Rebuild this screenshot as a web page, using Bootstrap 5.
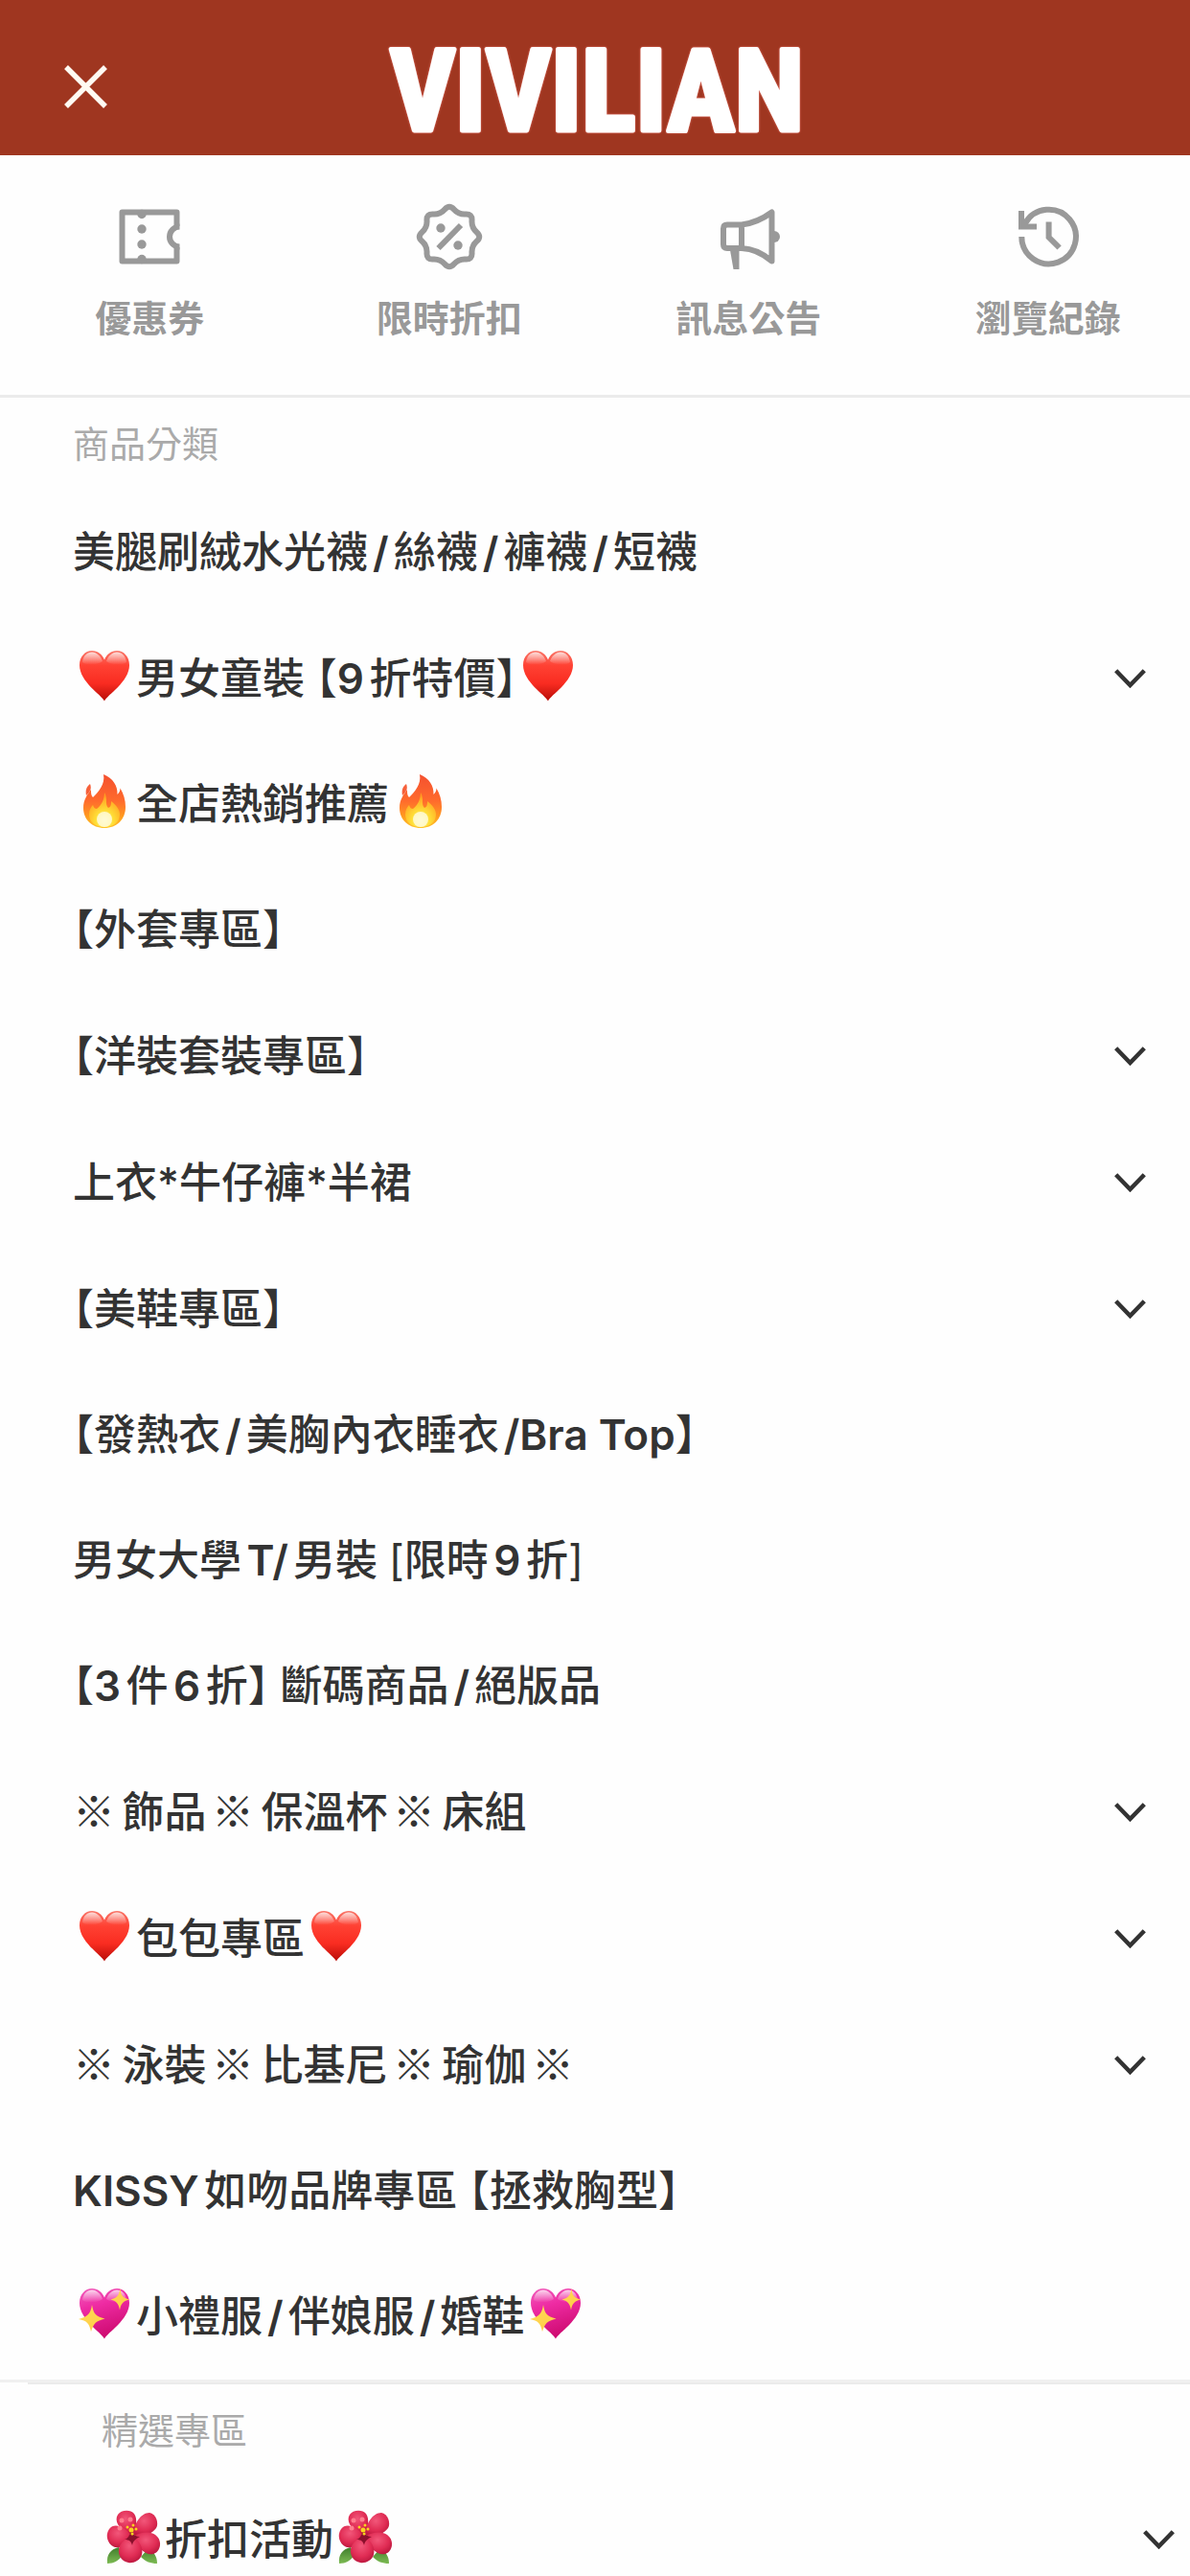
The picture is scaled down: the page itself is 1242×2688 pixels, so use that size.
<!DOCTYPE html>
<html lang="zh-Hant">
<head>
<meta charset="utf-8">
<meta name="viewport" content="width=device-width, initial-scale=1">
<title>VIVILIAN</title>
<link href="https://cdn.jsdelivr.net/npm/bootstrap@5.3.0/dist/css/bootstrap.min.css" rel="stylesheet">
<style>
  body {
    font-family: Inter, "Noto Sans CJK TC", sans-serif;
    color: #333;
    background: #fefefe;
    text-autospace: normal;
  }
  .drawer { height: 100vh; overflow: hidden; }

  /* Brand bar */
  .brand-bar { background: #9f3620; padding: 0 56px; }
  .brand-side { width: 66px; padding-top: 18px; }
  .brand-close { line-height: 0; color: #fffaf2; }
  .brand-logo svg { overflow: visible; }
  .brand-logo text {
    font-family: "Roboto Condensed", Roboto, sans-serif;
    font-weight: 700;
    font-size: 118px;
    fill: #fff;
    stroke: #fff;
    stroke-width: 5px;
    stroke-linejoin: round;
    filter: drop-shadow(0 0 1px #e2695c);
  }

  /* Shortcuts */
  .shortcuts { border-bottom: 3px solid #ebebeb; }
  .shortcut-row { margin-right: -8px; }
  .shortcut { color: #999; padding: 49px 0 55px; }
  .shortcut span { font-size: 38px; line-height: 50px; font-weight: 600; margin-top: 24px; }

  /* Category lists */
  .section-label { font-size: 38px; line-height: 56px; padding: 20px 0; color: #aaa; }
  .cat-section { padding-left: 76px; padding-right: 46px; }
  .cat-shift { padding-left: 106px; padding-right: 16px; }
  .cat-line { border-top: 3px solid #f0f0f0; }
  .cat-line-inner { height: 2px; margin-left: 29px; background: #ebebeb; }
  .cat-item {
    font-size: 44px;
    font-weight: 500;
    line-height: 65px;
    padding: 33px 0;
    color: #333;
    font-feature-settings: "halt";
    white-space: nowrap;
  }
  button.cat-item { line-height: 66px; }
  .cat-item i { font-style: normal; font-weight: 600; margin: 0 5px; }
  .cat-item b { font-weight: 600; }
  .kome { font-family: "Noto Sans CJK TC", sans-serif; font-weight: 300; line-height: 1; margin-right: 2px; }
  .emoji { width: 58px; height: 58px; margin: 0 4px; vertical-align: -10px; }
</style>
</head>
<body>
<svg class="position-absolute" width="0" height="0" aria-hidden="true">
  <defs>
    <linearGradient id="redFill" x1="0" y1="0" x2="0" y2="1">
      <stop offset="0" stop-color="#f9776a"/><stop offset=".3" stop-color="#ff4133"/><stop offset=".65" stop-color="#f92c21"/><stop offset="1" stop-color="#b80d08"/>
    </linearGradient>
    <linearGradient id="pinkFill" x1="0" y1="0" x2=".3" y2="1">
      <stop offset="0" stop-color="#f160bd"/><stop offset=".4" stop-color="#ee2ba3"/><stop offset="1" stop-color="#cf0c72"/>
    </linearGradient>
    <linearGradient id="gloss" x1="0" y1="0" x2="0" y2="1">
      <stop offset="0" stop-color="#fff" stop-opacity=".75"/><stop offset="1" stop-color="#fff" stop-opacity="0"/>
    </linearGradient>
    <linearGradient id="goldFill" x1="0" y1="0" x2="1" y2="1">
      <stop offset="0" stop-color="#ffe45c"/><stop offset=".6" stop-color="#ffcf4a"/><stop offset="1" stop-color="#f59a2e"/>
    </linearGradient>
    <linearGradient id="fireOuter" x1="0" y1="0" x2="0" y2="1">
      <stop offset="0" stop-color="#f4502f"/><stop offset=".5" stop-color="#ff6b2c"/><stop offset=".8" stop-color="#ff9d1f"/><stop offset="1" stop-color="#ffc52b"/>
    </linearGradient>
    <radialGradient id="fireInner" cx=".5" cy=".8" r=".7">
      <stop offset="0" stop-color="#fffbd0"/><stop offset=".4" stop-color="#ffe63a"/><stop offset="1" stop-color="#ffa51f"/>
    </radialGradient>
    <radialGradient id="petal" cx=".45" cy=".35" r=".7">
      <stop offset="0" stop-color="#f2577a"/><stop offset=".6" stop-color="#e02c54"/><stop offset="1" stop-color="#b8163c"/>
    </radialGradient>
    <linearGradient id="leaf" x1="0" y1="0" x2="0" y2="1">
      <stop offset="0" stop-color="#3f7d2c"/><stop offset="1" stop-color="#7dbb53"/>
    </linearGradient>
  </defs>
  <symbol id="heart" viewBox="0 0 58 58">
    <path d="M29 55.500C26 49 3 35.500 3 18 3 9 9 3 16 3c6 0 11 4 13 9.500C31 7 36 3 42 3c7 0 13 6 13 15 0 17.500-23 31-26 37.500z" fill="url(#redFill)"/>
    <path d="M6 15C7 8 11 4.500 16 4.500S25.500 9 27 14c-5 4-16 5-21 1zM31 14c1.500-5 6-9.500 11-9.500S51 8 52 15c-5 4-16 3-21-1z" fill="url(#gloss)"/>
  </symbol>
  <symbol id="sparkheart" viewBox="0 0 58 58">
    <path d="M29 55.500C26 49 3 35.500 3 18 3 9 9 3 16 3c6 0 11 4 13 9.500C31 7 36 3 42 3c7 0 13 6 13 15 0 17.500-23 31-26 37.500z" fill="url(#pinkFill)"/>
    <path d="M6 15C7 8 11 4.500 16 4.500S25.500 9 27 14c-5 4-16 5-21 1zM31 14c1.500-5 6-9.500 11-9.500S51 8 52 15c-5 4-16 3-21-1z" fill="url(#gloss)"/>
    <path d="M16 20c1.500 9 3.500 12 13.500 14.500C20 37 18 39 15 48c-2-9-4-11-13-13 9-2.500 12.500-5 14-15zM45.500 3c.8 7.500 2.500 9.500 9.500 11.500-7 2-8.500 4-10 11-1.500-7-3-9-9.500-11C42.500 12.500 44 10.500 45.500 3z" fill="url(#goldFill)"/>
  </symbol>
  <symbol id="fire" viewBox="0 0 58 58">
    <path d="M28 1c10 4 15 12 14.500 21 2-2 3-4 3-6.500C49 21 51 28 51 35c0 13-9 22-22 22S7 48 7 36c0-8 4-14 8-19 0 4 0 6 2 8 6-6 13-14 11-24z" fill="url(#fireOuter)"/>
    <path d="M14 11c2 5 0 8-4 12-1-5 0-9 4-12z" fill="#f6603a"/>
    <path d="M29 20c4 7 0 12 4 16 3-1 3-4 3-7 6 5 9 9 9 14 0 8-7 13-16 13s-16-5-16-13c0-5 2-8 4-10 1 3 2 4 4 4 5-4 8-10 8-17z" fill="url(#fireInner)" opacity=".9"/>
    <ellipse cx="29" cy="48" rx="8" ry="8" fill="#fffbd8" opacity=".85"/>
  </symbol>
  <symbol id="hibiscus" viewBox="0 0 58 58">
    <path d="M2 57c-1-9 3-15 12-17l4 8c-4 6-9 9-16 9zM54 57c0-7-3-12-9-16l-8 9c5 5 10 7 17 7z" fill="url(#leaf)"/>
    <path d="M22 26C14 20 9 12 13 6c3-5 13-6 17-1 4 6 2 14-1 21z" fill="url(#petal)"/>
    <path d="M29 26C30 15 37 4 46 4c7 1 10 11 7 16-4 6-14 9-22 8z" fill="url(#petal)"/>
    <path d="M30 28c9-5 20-5 25 2 4 6 2 15-5 17-8 2-18-7-20-19z" fill="url(#petal)"/>
    <path d="M27 28C20 18 9 14 4 21c-5 7-1 17 6 19 8 1 14-4 17-12z" fill="url(#petal)"/>
    <path d="M28 29c8 4 12 12 10 19-2 6-9 9-14 8-7-1-11-8-10-14 1-6 7-12 14-13z" fill="url(#petal)"/>
    <path d="M20 32c4-1 5-5 7-9 2 4 5 6 9 6-4 2-7 4-8 9-1-4-3-6-8-6z" fill="#8a0f2b"/>
    <g fill="#f9d21f"><circle cx="27" cy="22" r="2.500"/><circle cx="23" cy="19" r="1.500"/><circle cx="29" cy="17" r="1.500"/><circle cx="32" cy="21" r="1.500"/><circle cx="28" cy="26" r="1.500"/></g>
    <g fill="#ff7d8e"><circle cx="17" cy="12" r="2.500"/><circle cx="26" cy="11" r="2.500"/><circle cx="15" cy="20" r="2.500"/></g>
  </symbol>
  <symbol id="chev" viewBox="0 0 33 20">
    <path d="M1.700 1.700 16.500 17 31.300 1.700" fill="none" stroke="#333" stroke-width="4.500"/>
  </symbol>
</svg>

<div class="drawer">
  <header class="brand-bar d-flex align-items-center justify-content-between">
    <div class="brand-side">
      <button type="button" class="brand-close btn p-0 border-0" aria-label="關閉">
        <svg width="66" height="66" viewBox="0 0 66 66"><path d="M13 13 54 54M54 13 13 54" fill="none" stroke="currentColor" stroke-width="5.500"/></svg>
      </button>
    </div>
    <a href="#" class="brand-logo d-block" aria-label="VIVILIAN">
      <svg width="440" height="162" viewBox="0 0 440 162" class="d-block">
        <text x="222" y="136" text-anchor="middle">VIVILIAN</text>
      </svg>
    </a>
    <div class="brand-side"></div>
  </header>

  <nav class="shortcuts overflow-hidden">
    <div class="shortcut-row row g-0 row-cols-4">
      <a href="#" class="shortcut col d-flex flex-column align-items-center text-decoration-none">
        <svg width="72" height="72" viewBox="0 0 72 72" fill="none" stroke="currentColor" stroke-width="6">
          <path d="M64.500 47V61.500H7.500v-51h57V25" stroke-linejoin="round"/>
          <path d="M67.500 46.500a10.500 10.500 0 0 1 0-21"/>
          <g fill="currentColor" stroke="none"><circle cx="28" cy="28" r="4.700"/><circle cx="28" cy="44" r="4.700"/><circle cx="28" cy="12.500" r="4.700"/><circle cx="28" cy="59.500" r="4.700"/></g>
        </svg>
        <span>優惠券</span>
      </a>
      <a href="#" class="shortcut col d-flex flex-column align-items-center text-decoration-none">
        <svg width="72" height="72" viewBox="0 0 72 72" fill="none" stroke="currentColor" stroke-width="6">
          <path d="M31.200 7.500Q36 2 40.800 7.500 45.600 12.900 52.800 12.500 60 12 59.500 19.200 59.100 26.400 64.500 31.200 70 36 64.500 40.800 59.100 45.600 59.500 52.800 60 60 52.800 59.500 45.600 59.100 40.800 64.500 36 70 31.200 64.500 26.400 59.100 19.200 59.500 12 60 12.500 52.800 12.900 45.600 7.500 40.800 2 36 7.500 31.200 12.900 26.400 12.500 19.200 12 12 19.200 12.500 26.400 12.900 31.200 7.500z"/>
          <path d="M48 24 24.500 48"/>
          <g fill="currentColor" stroke="none"><circle cx="27" cy="27" r="4.700"/><circle cx="45" cy="45" r="4.700"/></g>
        </svg>
        <span>限時折扣</span>
      </a>
      <a href="#" class="shortcut col d-flex flex-column align-items-center text-decoration-none">
        <svg width="72" height="72" viewBox="0 0 72 72" fill="none" stroke="currentColor" stroke-width="6" stroke-linejoin="round">
          <path d="M29 23.500H14q-4 0-4 4V44q0 4 4 4h15zM29 23.500C42 22 53 16 60.500 10.500v51C53 55 42 48.500 29 48"/>
          <path d="M63 30a6 6 0 0 1 0 12z" fill="currentColor" stroke="none"/>
          <path d="M17 50h9.500v20h-6z" fill="currentColor" stroke="none"/>
        </svg>
        <span>訊息公告</span>
      </a>
      <a href="#" class="shortcut col d-flex flex-column align-items-center text-decoration-none">
        <svg width="72" height="72" viewBox="0 0 72 72" fill="none" stroke="currentColor" stroke-width="6">
          <path d="M8.300 36A28.300 28.300 0 1 0 12 22"/>
          <path d="M5 9h6v9l4 4.500h9v6H5z" fill="currentColor" stroke="none"/>
          <path d="M36.600 20.500V36.500l11 11"/>
        </svg>
        <span>瀏覽紀錄</span>
      </a>
    </div>
  </nav>

  <section class="cat-section">
    <h2 class="section-label m-0 fw-normal">商品分類</h2>
    <div class="d-flex flex-column">
      <a href="#" class="cat-item text-decoration-none">美腿刷絨水光襪<i>/</i>絲襪<i>/</i>褲襪<i>/</i>短襪</a>
      <button type="button" class="cat-item btn border-0 rounded-0 px-0 d-flex align-items-center justify-content-between"><span><svg class="emoji" role="img" aria-label="❤️"><use href="#heart"/></svg>男女童裝 【<b>9</b>折特價】<svg class="emoji" role="img" aria-label="❤️"><use href="#heart"/></svg></span><svg width="33" height="20"><use href="#chev"/></svg></button>
      <a href="#" class="cat-item text-decoration-none"><svg class="emoji" role="img" aria-label="🔥"><use href="#fire"/></svg>全店熱銷推薦<svg class="emoji" role="img" aria-label="🔥"><use href="#fire"/></svg></a>
      <a href="#" class="cat-item text-decoration-none">【外套專區】</a>
      <button type="button" class="cat-item btn border-0 rounded-0 px-0 d-flex align-items-center justify-content-between"><span>【洋裝套裝專區】</span><svg width="33" height="20"><use href="#chev"/></svg></button>
      <button type="button" class="cat-item btn border-0 rounded-0 px-0 d-flex align-items-center justify-content-between"><span>上衣*牛仔褲*半裙</span><svg width="33" height="20"><use href="#chev"/></svg></button>
      <button type="button" class="cat-item btn border-0 rounded-0 px-0 d-flex align-items-center justify-content-between"><span>【美鞋專區】</span><svg width="33" height="20"><use href="#chev"/></svg></button>
      <a href="#" class="cat-item text-decoration-none">【發熱衣<i>/</i>美胸內衣睡衣<i class="me-0">/</i><b>Bra Top</b>】</a>
      <a href="#" class="cat-item text-decoration-none">男女大學<b>T</b><i class="ms-0">/</i>男裝 <span class="fw-normal">[</span>限時<b>9</b>折<span class="fw-normal">]</span></a>
      <a href="#" class="cat-item text-decoration-none">【<b>3</b>件<b>6</b>折】 斷碼商品<i>/</i>絕版品</a>
      <button type="button" class="cat-item btn border-0 rounded-0 px-0 d-flex align-items-center justify-content-between"><span><span class="kome">※</span>飾品<span class="kome">※</span>保溫杯<span class="kome">※</span>床組</span><svg width="33" height="20"><use href="#chev"/></svg></button>
      <button type="button" class="cat-item btn border-0 rounded-0 px-0 d-flex align-items-center justify-content-between"><span><svg class="emoji" role="img" aria-label="❤️"><use href="#heart"/></svg>包包專區<svg class="emoji" role="img" aria-label="❤️"><use href="#heart"/></svg></span><svg width="33" height="20"><use href="#chev"/></svg></button>
      <button type="button" class="cat-item btn border-0 rounded-0 px-0 d-flex align-items-center justify-content-between"><span><span class="kome">※</span>泳裝<span class="kome">※</span>比基尼<span class="kome">※</span>瑜伽<span class="kome">※</span></span><svg width="33" height="20"><use href="#chev"/></svg></button>
      <a href="#" class="cat-item text-decoration-none"><b>KISSY</b>如吻品牌專區 【拯救胸型】</a>
      <a href="#" class="cat-item text-decoration-none"><svg class="emoji" role="img" aria-label="💖"><use href="#sparkheart"/></svg>小禮服<i>/</i>伴娘服<i>/</i>婚鞋<svg class="emoji" role="img" aria-label="💖"><use href="#sparkheart"/></svg></a>
    </div>
  </section>

  <div class="cat-line"><div class="cat-line-inner"></div></div>
  <section class="cat-section cat-shift">
    <h2 class="section-label m-0 fw-normal">精選專區</h2>
    <div class="d-flex flex-column">
      <button type="button" class="cat-item btn border-0 rounded-0 px-0 d-flex align-items-center justify-content-between"><span><svg class="emoji" role="img" aria-label="🌺"><use href="#hibiscus"/></svg>折扣活動<svg class="emoji" role="img" aria-label="🌺"><use href="#hibiscus"/></svg></span><svg width="33" height="20"><use href="#chev"/></svg></button>
    </div>
  </section>
</div>
<script src="https://cdn.jsdelivr.net/npm/bootstrap@5.3.0/dist/js/bootstrap.bundle.min.js"></script>
</body>
</html>
